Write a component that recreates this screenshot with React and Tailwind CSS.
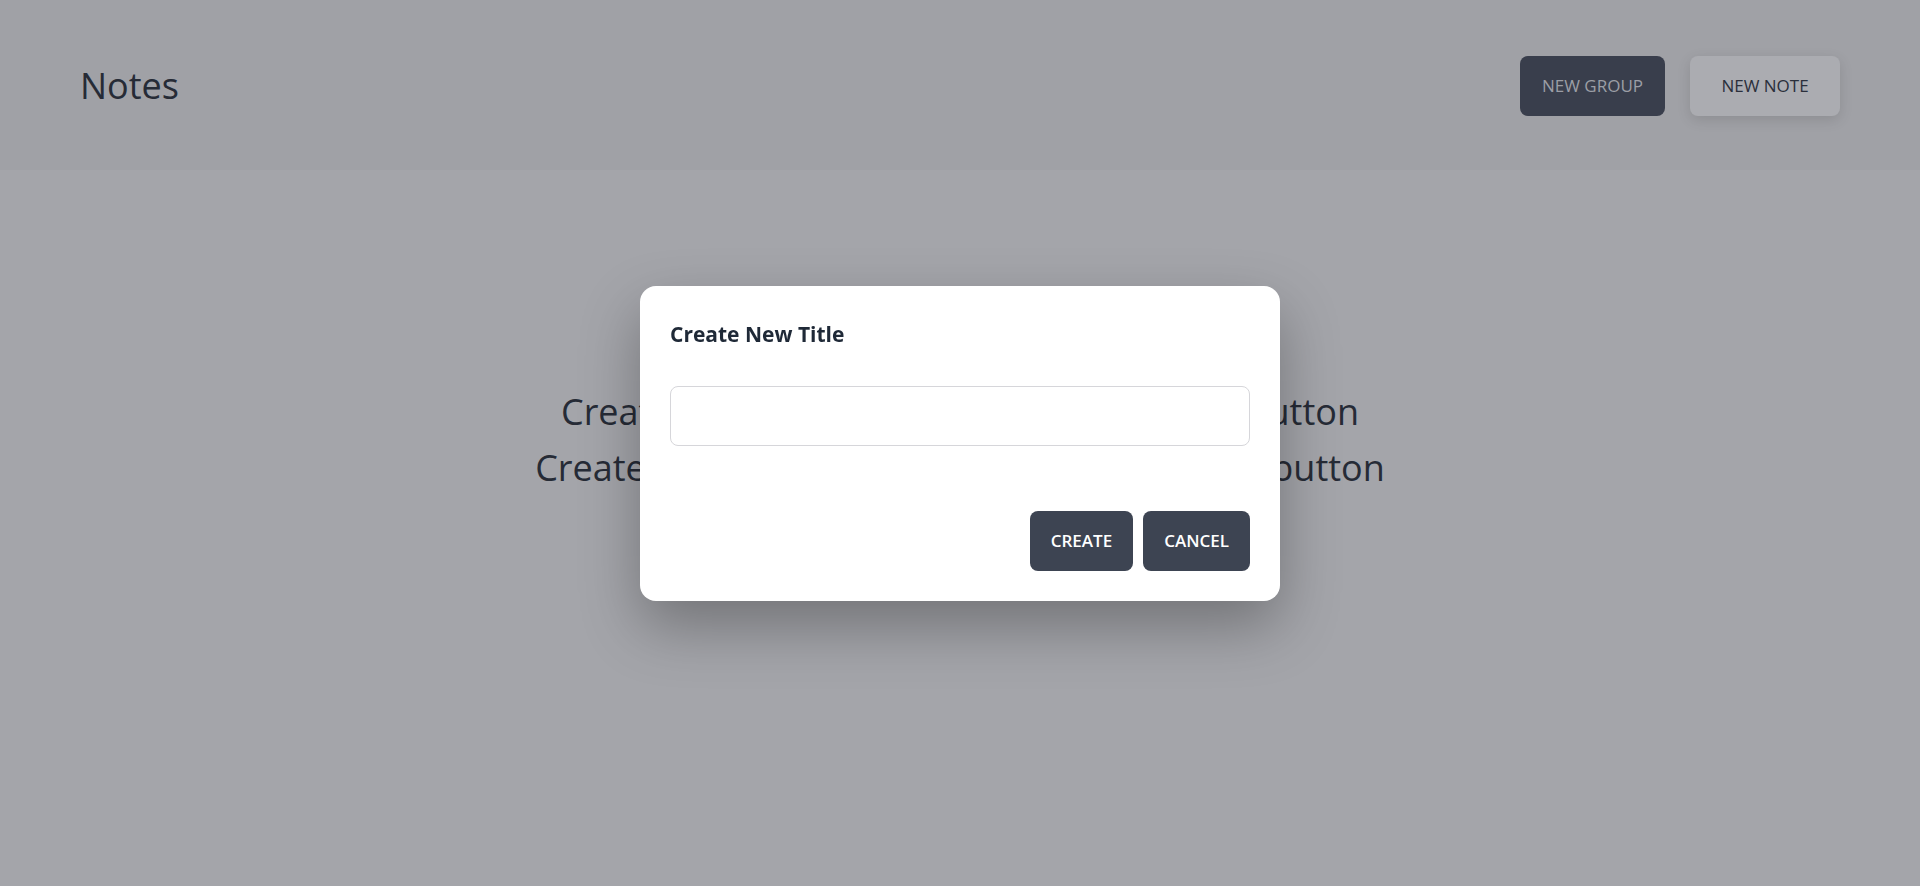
import { useState } from "react"

export default function App() {
  const [title, setTitle] = useState("")

  return (
    <div className="min-h-screen bg-[#a4a5aa] font-['Open_Sans',sans-serif] text-[#262b36]">
      {/* Header */}
      <header className="h-[170px] bg-[#a0a1a6] flex items-center justify-between px-20 pt-[2px]">
        <h1 className="text-4xl">Notes</h1>
        <div className="flex gap-[25px]">
          <button className="w-[145px] h-[60px] rounded-lg bg-[#393e4c] text-[#9c9ea6] text-[17px]">
            NEW GROUP
          </button>
          <button className="w-[150px] h-[60px] rounded-lg bg-[#abacb1] text-[#2a2f3b] text-[17px] shadow-[0_4px_14px_rgba(0,0,0,0.12)]">
            NEW NOTE
          </button>
        </div>
      </header>

      {/* Empty state */}
      <main className="flex flex-col items-center pt-[222px] gap-[16px] text-4xl">
        <p>Create a new group with the New Group button</p>
        <p>Create a note in a group with the New Note button</p>
      </main>

      {/* Modal */}
      <div className="fixed inset-0 flex items-center justify-center">
        <div className="w-[640px] bg-white rounded-2xl p-[30px] shadow-[0_25px_60px_rgba(0,0,0,0.3)]">
          <h2 className="text-[21px] leading-[36px] font-bold text-[#1f2937]">Create New Title</h2>
          <input
            value={title}
            onChange={(e) => setTitle(e.target.value)}
            className="mt-[34px] w-full h-[60px] rounded-lg border border-[#d6d6da] px-4 text-lg outline-none"
          />
          <div className="mt-[65px] flex justify-end gap-[10px]">
            <button className="h-[60px] px-[21px] rounded-lg bg-[#3d4452] text-white text-[17px] font-semibold">
              CREATE
            </button>
            <button className="h-[60px] px-[21px] rounded-lg bg-[#3d4452] text-white text-[17px] font-semibold">
              CANCEL
            </button>
          </div>
        </div>
      </div>
    </div>
  )
}
